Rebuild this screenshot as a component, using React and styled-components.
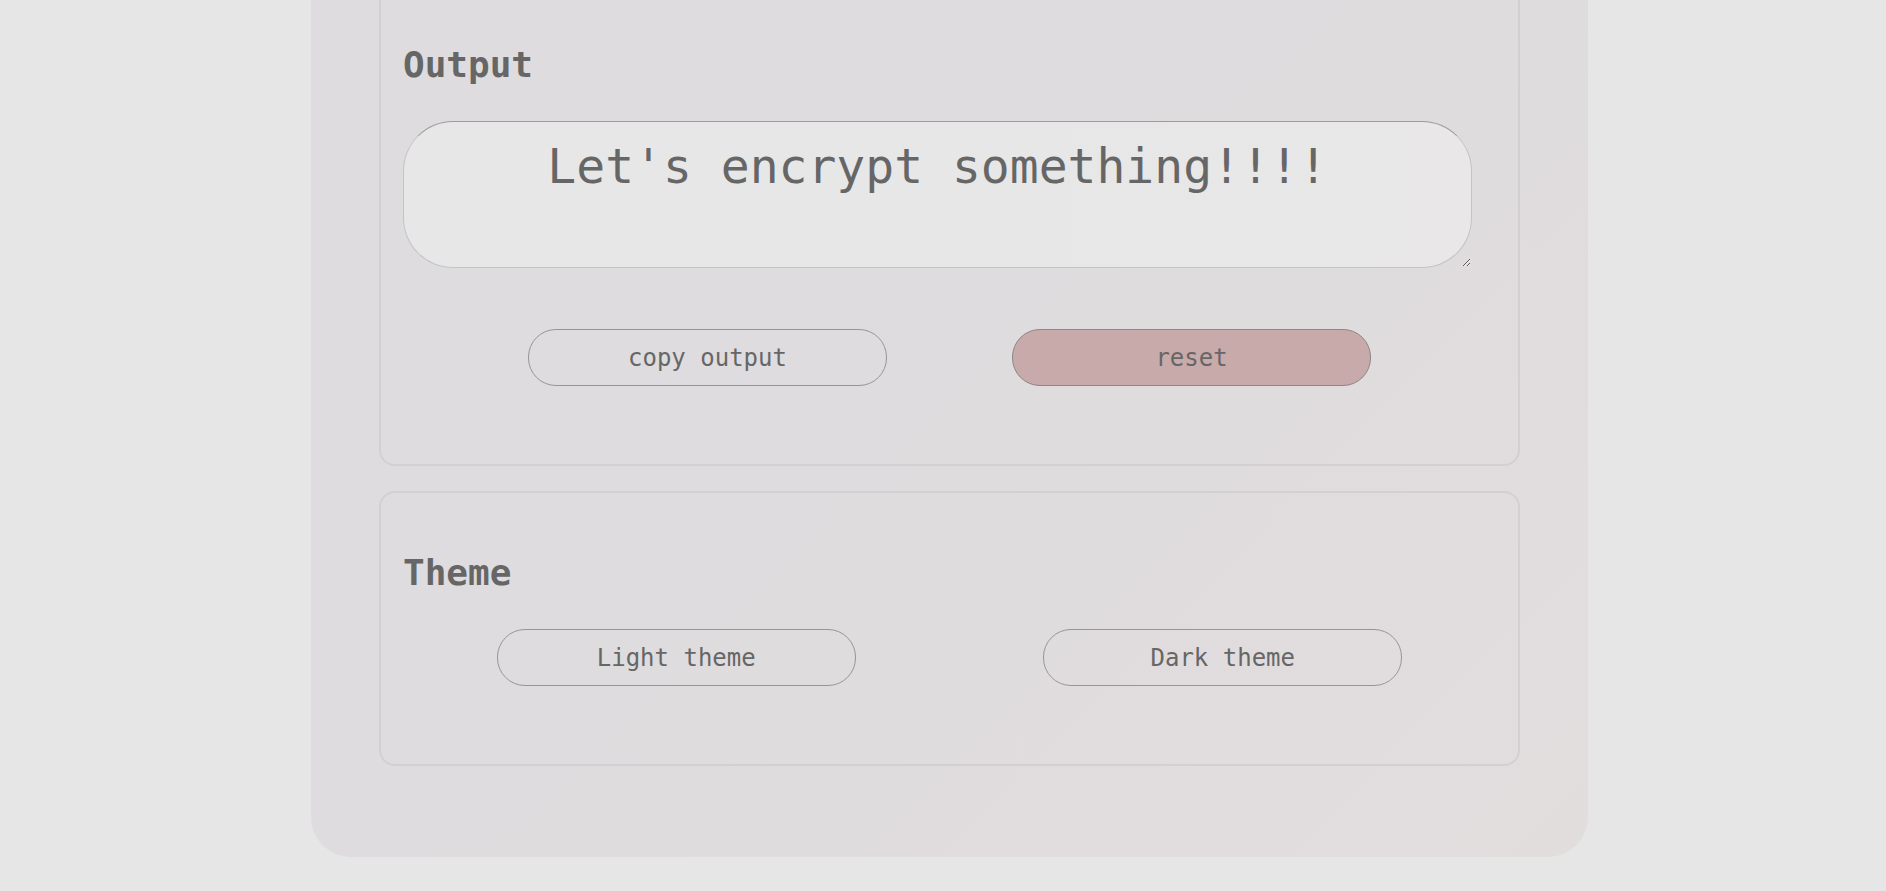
import styled, { createGlobalStyle } from "styled-components";

const GlobalStyle = createGlobalStyle`
  html, body {
    margin: 0;
    padding: 0;
    background: #e6e6e6;
    font-family: "DejaVu Sans Mono", "Liberation Mono", monospace;
    color: #666666;
  }
`;

const Page = styled.main`
  display: flex;
  justify-content: center;
  padding-left: 13px;
`;

const Card = styled.div`
  width: 1277px;
  box-sizing: border-box;
  margin-top: -57px;
  padding: 40px 68px 91px;
  border-radius: 0 0 40px 40px;
  background: linear-gradient(135deg, #dedcdf 0%, #dfdcde 55%, #e2dddd 100%);
  display: flex;
  flex-direction: column;
  gap: 25px;
`;

const Section = styled.section`
  border: 2px solid #d2d0d2;
  border-radius: 16px;
  padding: 59px 22px 78px;
  display: flex;
  flex-direction: column;
`;

const Heading = styled.h2`
  margin: 0 0 35px;
  font-size: 36px;
  line-height: 42px;
  font-weight: bold;
  color: #666666;
`;

const Output = styled.textarea`
  width: 1069px;
  height: 147px;
  box-sizing: border-box;
  margin: 0 0 61px;
  padding: 16px 40px 0;
  border: 1px solid #c4c3c5;
  border-top-color: #9c9b9d;
  border-radius: 50px;
  background: linear-gradient(90deg, #e7e7e8 0%, #e8e7e8 60%, #e9e7e8 100%);
  font-family: "DejaVu Sans Mono", "Liberation Mono", monospace;
  font-size: 48px;
  line-height: 56px;
  color: #666666;
  text-align: center;
  outline: none;

  &::placeholder {
    color: #666666;
    opacity: 1;
  }
`;

const ButtonRow = styled.div`
  display: flex;
  justify-content: ${(p) => p.$spread};
`;

const Button = styled.button`
  width: 359px;
  height: 57px;
  box-sizing: border-box;
  border: 1px solid ${(p) => (p.$danger ? "#8d8586" : "#969596")};
  border-radius: 28px;
  background: ${(p) => (p.$danger ? "#c9aaab" : "transparent")};
  font-family: "DejaVu Sans Mono", "Liberation Mono", monospace;
  font-size: 24px;
  color: #666666;
  padding: 0;
  cursor: pointer;
`;

function App() {
  return (
    <>
      <GlobalStyle />
      <Page>
        <Card>
          <Section>
            <Heading>Output</Heading>
            <Output readOnly placeholder="Let's encrypt something!!!!" />
            <ButtonRow $spread="space-evenly">
              <Button>copy output</Button>
              <Button $danger>reset</Button>
            </ButtonRow>
          </Section>
          <Section>
            <Heading>Theme</Heading>
            <ButtonRow $spread="space-around">
              <Button>Light theme</Button>
              <Button>Dark theme</Button>
            </ButtonRow>
          </Section>
        </Card>
      </Page>
    </>
  );
}

export default App;
